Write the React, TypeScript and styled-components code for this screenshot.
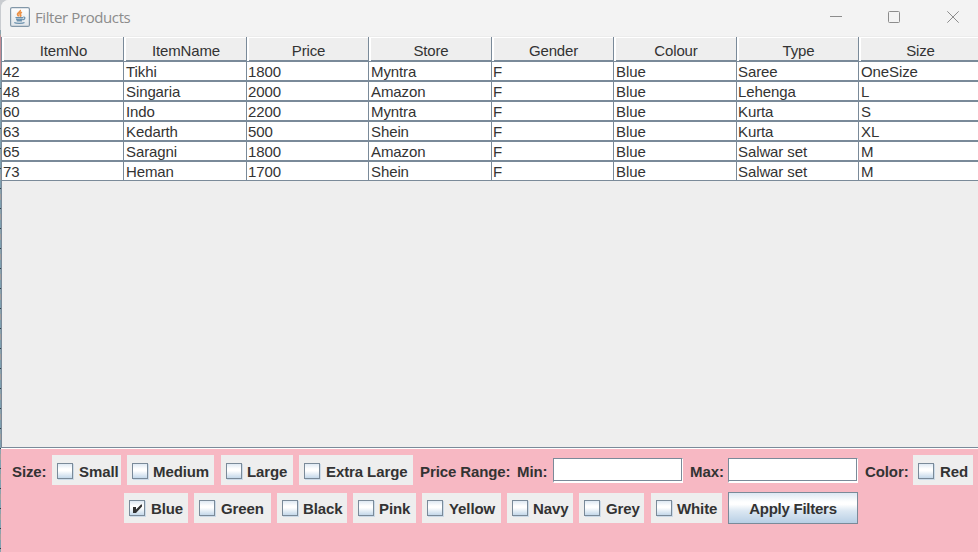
import React, { useState } from "react";
import styled, { createGlobalStyle } from "styled-components";

const LINE = "#7a8a99";
const GREY = "#eeeeee";
const INK = "#333333";

const GlobalStyle = createGlobalStyle`
  * { box-sizing: border-box; }
  body { margin: 0; overflow: hidden; font-family: "Liberation Sans", Arial, sans-serif; }
`;

const Desktop = styled.div`
  width: 978px;
  height: 552px;
  padding-left: 1px;
  background:
    linear-gradient(#c9ccd0 0 30px, transparent 30px 36px, #c58d96 36px 74px, transparent 74px),
    repeating-linear-gradient(#7fa0b0 0 8px, #343e4c 8px 9px, #8ba3ad 9px 14px, #a6a09e 14px 20px);
`;

const Window = styled.div`
  display: flex;
  flex-direction: column;
  width: 977px;
  height: 552px;
  overflow: hidden;
  border-top-left-radius: 8px;
  background: ${GREY};
`;

const TitleBar = styled.header`
  display: flex;
  align-items: center;
  flex: none;
  height: 37px;
  padding: 0 19px 3px 9px;
  background: #f3f3f3;
  border-bottom: 1px solid #ececec;
`;

const Title = styled.h1`
  flex: 1;
  margin: 1px 0 0 5px;
  font: 400 15px/20px "Open Sans", "Noto Sans", sans-serif;
  letter-spacing: -0.4px;
  color: #8c8c8c;
`;

const Controls = styled.div`
  display: flex;
  gap: 47px;
  svg { display: block; }
  svg:first-child { margin-right: -1px; }
`;

const ScrollPane = styled.main`
  flex: none;
  height: 411px;
  border-left: 1px solid ${LINE};
  border-bottom: 1px solid ${LINE};
`;

const Grid = styled.div`
  display: grid;
  grid-template-columns: 122px 123px 122px 123px 122px 123px 122px 122px;
`;

const HeadCell = styled.div`
  height: 24px;
  padding: 5px 0 0 2px;
  text-align: center;
  font-size: 15px;
  line-height: 18px;
  letter-spacing: -0.15px;
  color: ${INK};
  border-right: 1px solid ${LINE};
  background:
    linear-gradient(#fff, #fff) 0 0 / 100% 1px no-repeat,
    linear-gradient(#fff, #fff) 0 0 / 2px 100% no-repeat,
    linear-gradient(${LINE}, ${LINE}) 0 100% / 100% 1px no-repeat,
    ${GREY};
`;

const Cell = styled.div<{ $pad: number }>`
  height: 20px;
  padding-left: ${(p) => p.$pad}px;
  font-size: 15px;
  line-height: 19px;
  letter-spacing: -0.1px;
  white-space: nowrap;
  color: ${INK};
  background: #fff;
  border: solid ${LINE};
  border-width: 1px 1px 1px 0;
`;

const FilterPanel = styled.footer`
  flex: 1;
  border-top: 1px solid #fff;
  padding-top: 6px;
  background: #f7b8c3;
`;

const FilterRow = styled.div<{ $indent: number; $shift?: number }>`
  display: flex;
  align-items: center;
  height: ${(p) => (p.$shift ? 32 : 30)}px;
  margin-top: ${(p) => p.$shift ?? 0}px;
  padding-left: ${(p) => p.$indent}px;
  font-size: 15px;
  font-weight: 700;
  color: ${INK};
`;

const Label = styled.span<{ $w: number }>`
  flex: none;
  width: ${(p) => p.$w}px;
  padding-top: 3px;
  line-height: 18px;
  letter-spacing: -0.1px;
  white-space: nowrap;
`;

const Option = styled.label<{ $w: number; $gap: number; $drop?: number }>`
  display: flex;
  align-items: center;
  flex: none;
  width: ${(p) => p.$w}px;
  height: 30px;
  margin-right: ${(p) => p.$gap}px;
  padding: ${(p) => p.$drop ?? 0}px 0 0 5px;
  background: ${GREY};
  white-space: nowrap;
`;

const Box = styled.span<{ $space: number }>`
  flex: none;
  width: 16px;
  height: 16px;
  margin: 0 ${(p) => p.$space}px 0 0;
  border: 1px solid ${LINE};
  background: linear-gradient(#dfe9f3, #fff 35%, #fff 48%, #c4d8ea);
  box-shadow: 1px 1px 0 #cbdae8;
  svg { display: block; }
`;

const HiddenCheck = styled.input`
  appearance: none;
  width: 0;
  height: 0;
  margin: 0;
`;

const OptionText = styled.span`
  padding-top: 1px;
  line-height: 18px;
  letter-spacing: -0.1px;
`;

const PriceField = styled.input<{ $gap: number }>`
  flex: none;
  width: 130px;
  height: 25px;
  margin: 0 ${(p) => p.$gap}px 0 0;
  padding: 0 3px;
  border: 1px solid ${LINE};
  border-right-color: #fff;
  border-bottom: 2px solid #fff;
  border-radius: 0;
  outline: 0;
  background: #fff;
  box-shadow: inset -1px -1px 0 ${LINE};
  font: 15px "Liberation Sans", Arial, sans-serif;
`;

const ApplyButton = styled.button`
  width: 130px;
  height: 32px;
  padding: 2px 0 0;
  border: 1px solid ${LINE};
  border-radius: 0;
  background: linear-gradient(#dde8f3, #fff 30%, #fff 38%, #dbe7f2 60%, #b8cfe5);
  font: 700 15px/18px "Liberation Sans", Arial, sans-serif;
  letter-spacing: -0.25px;
  color: ${INK};
`;

const columns = ["ItemNo", "ItemName", "Price", "Store", "Gender", "Colour", "Type", "Size"];
const cellPadding = [1, 2, 1, 2, 1, 2, 1, 2];
const products = [
  ["42", "Tikhi", "1800", "Myntra", "F", "Blue", "Saree", "OneSize"],
  ["48", "Singaria", "2000", "Amazon", "F", "Blue", "Lehenga", "L"],
  ["60", "Indo", "2200", "Myntra", "F", "Blue", "Kurta", "S"],
  ["63", "Kedarth", "500", "Shein", "F", "Blue", "Kurta", "XL"],
  ["65", "Saragni", "1800", "Amazon", "F", "Blue", "Salwar set", "M"],
  ["73", "Heman", "1700", "Shein", "F", "Blue", "Salwar set", "M"],
];

type OptionSpec = { name: string; w: number; gap: number; space?: number };
const sizes: OptionSpec[] = [
  { name: "Small", w: 69, gap: 6 },
  { name: "Medium", w: 87, gap: 7, space: 5 },
  { name: "Large", w: 72, gap: 6, space: 5 },
  { name: "Extra Large", w: 114, gap: 7 },
];
const colours: OptionSpec[] = [
  { name: "Blue", w: 64, gap: 6 },
  { name: "Green", w: 77, gap: 6 },
  { name: "Black", w: 70, gap: 6, space: 5 },
  { name: "Pink", w: 63, gap: 6, space: 5 },
  { name: "Yellow", w: 79, gap: 6 },
  { name: "Navy", w: 66, gap: 6, space: 5 },
  { name: "Grey", w: 65, gap: 7 },
  { name: "White", w: 71, gap: 6, space: 5 },
];

function JavaIcon() {
  return (
    <svg width="20" height="20" viewBox="0 0 20 20" fill="none">
      <defs>
        <linearGradient id="tile" x1="0" y1="0" x2="0" y2="1">
          <stop offset="0" stopColor="#fff" />
          <stop offset="1" stopColor="#e0e5e9" />
        </linearGradient>
      </defs>
      <rect x=".6" y=".6" width="18.8" height="18.8" rx="1.5" fill="url(#tile)" stroke="#8297a8" strokeWidth="1.2" />
      <path d="M10.200 3c1 2-3.200 2.700-2.600 4.500.2.800 1 1.200 1 2M12 5.300c-1.800.8-2.600 1.500-1.500 2.600.5.600.2 1.200-.5 1.700" stroke="#ec9248" strokeWidth="1.8" />
      <path d="M5.500 10.500h7.500l-1 3.300H6.800z" fill="#a9bfcf" />
      <path d="M5.500 10.500h7.500M6.200 12.300c1.700.5 4.700.5 6.200 0M6.800 13.900h5.200M13.300 10.200c2.200-.5 2.200 2-.7 2.600M4.300 15.600c1.500 1 8.500 1 10.200 0" stroke="#6b91ae" strokeWidth="1.200" />
    </svg>
  );
}

function CheckOption({ spec, initial = false, drop }: { spec: OptionSpec; initial?: boolean; drop?: number }) {
  const [checked, setChecked] = useState(initial);
  return (
    <Option $w={spec.w} $gap={spec.gap} $drop={drop}>
      <HiddenCheck type="checkbox" checked={checked} onChange={() => setChecked(!checked)} />
      <Box $space={spec.space ?? 6}>
        {checked && (
          <svg width="14" height="14" viewBox="0 0 14 14">
            <path d="M3 6h3v2.500L11 3.500h1V5.500L6 12H3z" fill={INK} />
          </svg>
        )}
      </Box>
      <OptionText>{spec.name}</OptionText>
    </Option>
  );
}

export default function App() {
  return (
    <Desktop>
      <GlobalStyle />
      <Window>
        <TitleBar>
          <JavaIcon />
          <Title>Filter Products</Title>
          <Controls>
            <svg width="12" height="12" viewBox="0 0 12 12" stroke="#8c8c8c">
              <path d="M0 5.500h12" />
            </svg>
            <svg width="12" height="12" viewBox="0 0 12 12" fill="none" stroke="#8c8c8c">
              <rect x=".5" y=".5" width="11" height="11" rx="1" />
            </svg>
            <svg width="12" height="12" viewBox="0 0 12 12" stroke="#8c8c8c">
              <path d="M.3.3l11.400 11.400M11.700.3L.3 11.700" />
            </svg>
          </Controls>
        </TitleBar>
        <ScrollPane>
          <Grid>
            {columns.map((c) => (
              <HeadCell key={c}>{c}</HeadCell>
            ))}
            {products.flatMap((row) =>
              row.map((value, i) => (
                <Cell key={row[0] + columns[i]} $pad={cellPadding[i]}>
                  {value}
                </Cell>
              ))
            )}
          </Grid>
        </ScrollPane>
        <FilterPanel>
          <FilterRow $indent={11}>
            <Label $w={40}>Size:</Label>
            {sizes.map((s) => (
              <CheckOption key={s.name} spec={s} drop={2} />
            ))}
            <Label $w={97}>Price Range:</Label>
            <Label $w={36}>Min:</Label>
            <PriceField $gap={7} aria-label="Minimum price" />
            <Label $w={38}>Max:</Label>
            <PriceField $gap={7} aria-label="Maximum price" />
            <Label $w={48}>Color:</Label>
            <CheckOption spec={{ name: "Red", w: 60, gap: 0 }} drop={2} />
          </FilterRow>
          <FilterRow $indent={123} $shift={7}>
            {colours.map((c) => (
              <CheckOption key={c.name} spec={c} initial={c.name === "Blue"} />
            ))}
            <ApplyButton>Apply Filters</ApplyButton>
          </FilterRow>
        </FilterPanel>
      </Window>
    </Desktop>
  );
}
